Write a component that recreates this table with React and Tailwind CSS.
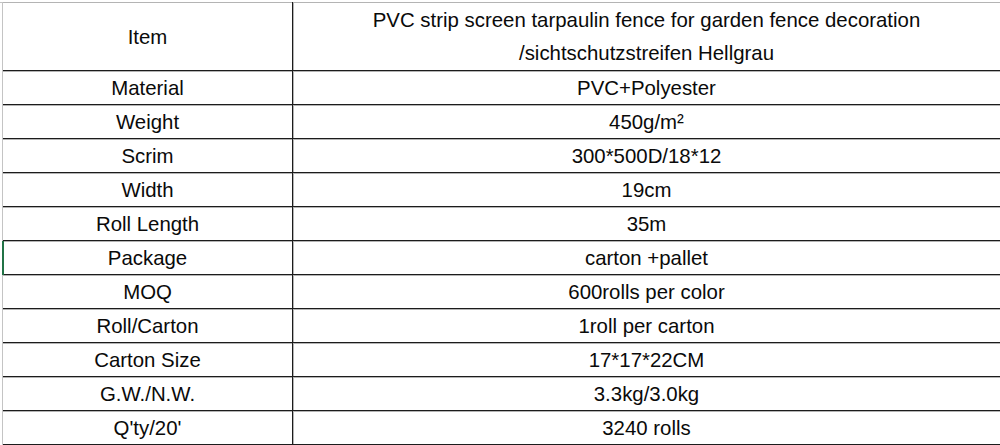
const rows = [
  ['Material', 'PVC+Polyester'],
  ['Weight', '450g/m²'],
  ['Scrim', '300*500D/18*12'],
  ['Width', '19cm'],
  ['Roll Length', '35m'],
  ['Package', 'carton +pallet'],
  ['MOQ', '600rolls per color'],
  ['Roll/Carton', '1roll per carton'],
  ['Carton Size', '17*17*22CM'],
  ['G.W./N.W.', '3.3kg/3.0kg'],
  ["Q'ty/20'", '3240 rolls'],
];

function Row({ label, value, selected }) {
  return (
    <div className="flex h-[34px]">
      <div className="flex w-[3px] flex-col">
        <div className="ml-[2px] flex-1 border-l border-[#c4c4c4]" />
      </div>
      <div className="relative flex flex-1 border-b border-[#1c1c1c]">
        {selected && <div className="absolute left-[-1px] top-0 h-[34px] w-[2px] bg-[#217346]" />}
        <div className="flex w-[290px] items-center justify-center border-r border-[#1c1c1c] pt-[2px] shadow-[inset_0_1px_0_#b4b4b4]">
          {label}
        </div>
        <div className="flex flex-1 items-center justify-center pt-[2px] shadow-[inset_1px_1px_0_#b4b4b4]">{value}</div>
      </div>
    </div>
  );
}

export default function App() {
  return (
    <div
      className="h-[445px] w-[1000px] overflow-hidden bg-white pt-[2px] text-[20.4px] text-[#0a0a0a]"
      style={{ fontFamily: '"Liberation Sans", Arial, sans-serif' }}
    >
      <div className="flex h-[69px] shadow-[inset_0_1px_0_#c4c4c4]">
        <div className="flex w-[3px] flex-col">
          <div className="ml-[2px] h-[34px] border-b border-l border-[#c4c4c4]" />
          <div className="ml-[2px] flex-1 border-l border-[#c4c4c4]" />
        </div>
        <div className="flex flex-1 border-b border-[#1c1c1c]">
          <div className="flex w-[290px] items-center justify-center border-r border-[#1c1c1c] pt-[2px] shadow-[inset_0_1px_0_#b4b4b4]">
            Item
          </div>
          <div className="flex flex-1 flex-col items-center justify-center pt-[2px] leading-[33px] shadow-[inset_1px_1px_0_#b4b4b4]">
            <span>PVC strip screen tarpaulin fence for garden fence decoration</span>
            <span>/sichtschutzstreifen Hellgrau</span>
          </div>
        </div>
      </div>
      {rows.map(([label, value]) => (
        <Row key={label} label={label} value={value} selected={label === 'Package'} />
      ))}
    </div>
  );
}
